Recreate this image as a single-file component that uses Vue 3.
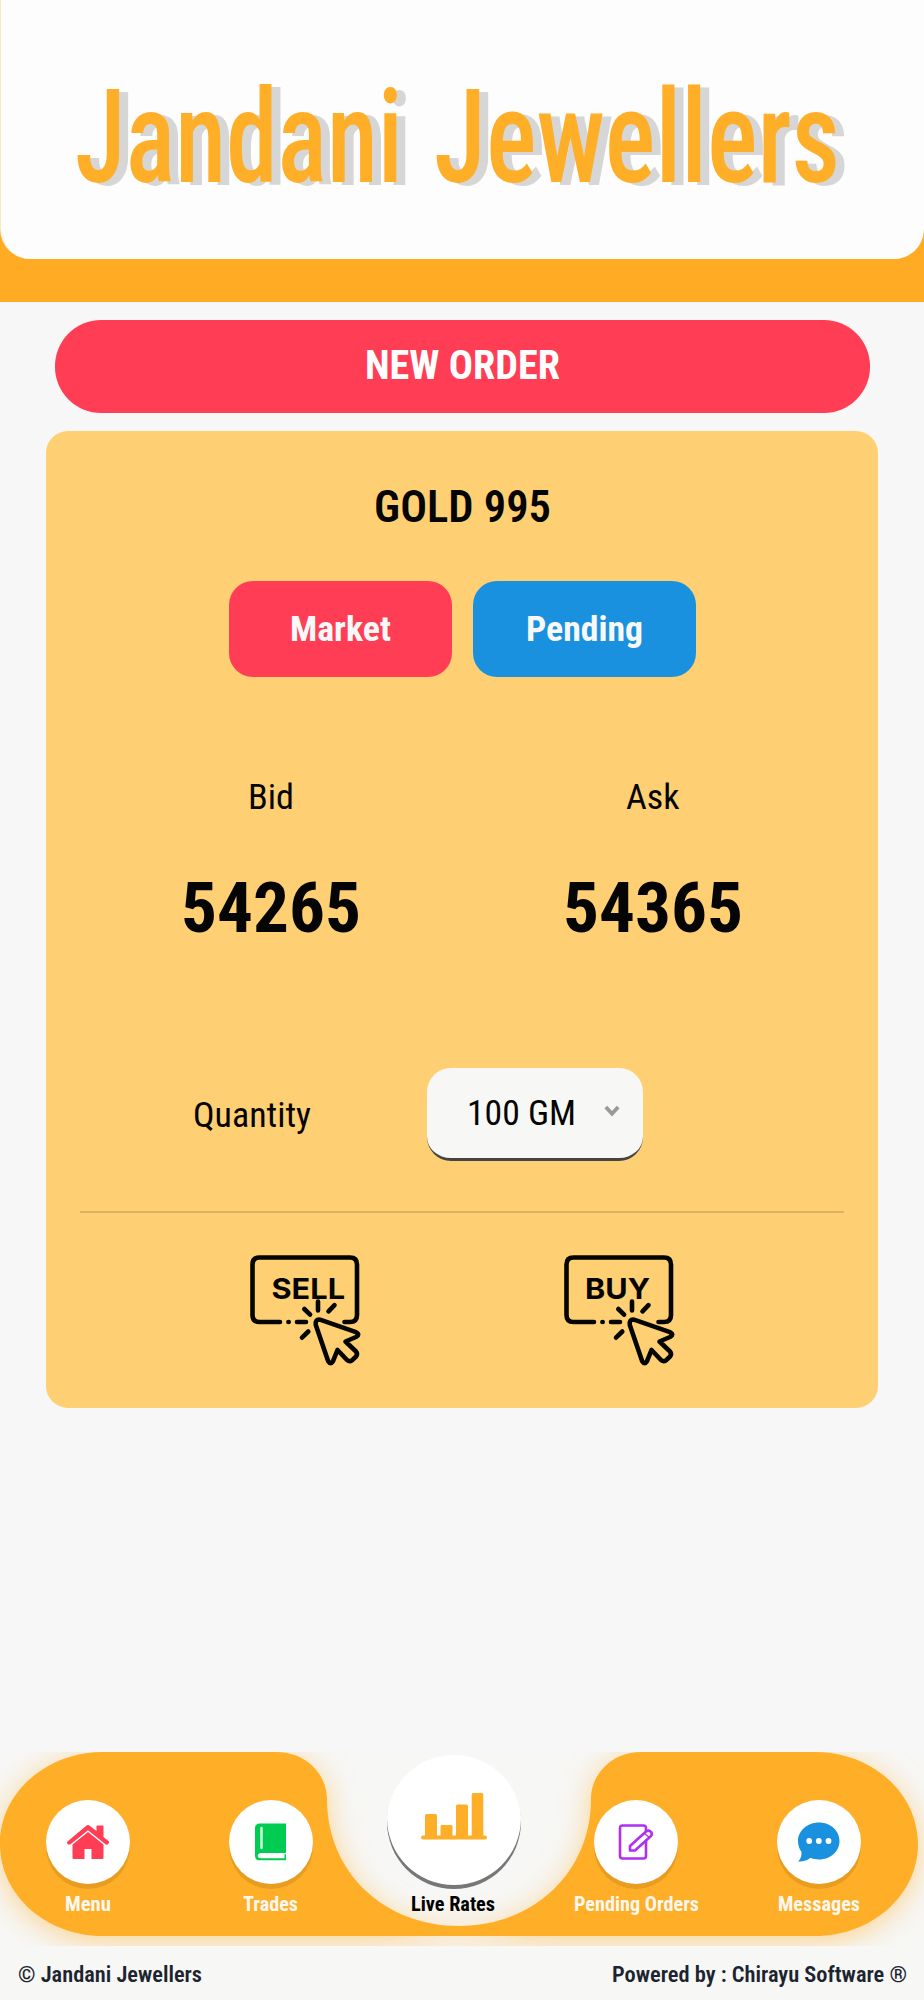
<script setup>
import { h } from 'vue'

// Text set to an exact advance width; the baseline lies at the font size.
const Fit = (p) =>
  h('svg', { width: p.w, height: p.size * 1.25, class: 'fit', style: { flex: 'none', marginBottom: -p.size / 4 + 'px' } }, [
    h('text', {
      x: 0, y: p.size, textLength: p.w, lengthAdjust: 'spacingAndGlyphs',
      'font-size': p.size, 'font-weight': p.weight || 700, fill: 'currentColor'
    }, p.t)
  ])
Fit.props = ['t', 'w', 'size', 'weight']

const nav = [
  { k: 'home', t: 'Menu', w: 46 },
  { k: 'book', t: 'Trades', w: 55 },
  { k: 'live', t: 'Live Rates', w: 84 },
  { k: 'edit', t: 'Pending Orders', w: 125 },
  { k: 'chat', t: 'Messages', w: 82 }
]
</script>

<template>
  <div class="page">
    <header class="header">
      <div class="panel">
        <Fit class="title" t="Jandani" :w="328" :size="129" :weight="500" />
        <Fit class="title" t="Jewellers" :w="406" :size="129" :weight="500" />
      </div>
    </header>

    <div class="banner"><Fit t="NEW ORDER" :w="195" :size="40" /></div>

    <main class="card">
      <Fit class="gold" t="GOLD 995" :w="177" :size="44" :weight="600" />
      <div class="tabs">
        <button class="tab red"><Fit t="Market" :w="101" :size="35.5" /></button>
        <button class="tab blue"><Fit t="Pending" :w="117" :size="35.5" /></button>
      </div>
      <div class="rates">
        <div class="rate"><Fit t="Bid" :w="46" :size="35.5" :weight="400" /><Fit class="num" t="54265" :w="180" :size="71" /></div>
        <div class="rate"><Fit t="Ask" :w="53.5" :size="35.5" :weight="400" /><Fit class="num" t="54365" :w="180" :size="71" /></div>
      </div>
      <div class="qty">
        <Fit class="qlabel" t="Quantity" :w="118" :size="35.5" :weight="400" />
        <div class="select">
          <Fit t="100 GM" :w="109" :size="35.5" :weight="400" />
          <svg class="chev" width="16" height="12" viewBox="0 0 16 12"><path d="M1.800 2 8 8.700 14.200 2" fill="none" stroke="#999" stroke-width="3.800" /></svg>
        </div>
      </div>
      <hr class="rule" />
      <div class="actions">
        <svg v-for="l in ['SELL', 'BUY']" :key="l" class="action" width="112" height="112" viewBox="0 0 112 112">
          <g fill="none" stroke="#050500" stroke-width="4.600" stroke-linecap="round" stroke-linejoin="round">
            <path d="M30 67H9.500Q2.500 67 2.500 60V9.500Q2.500 2.500 9.500 2.500H100Q107 2.500 107 9.500V60Q107 67 100 67H94.500M38.400 67h.3M47 67h9" />
            <path d="M68 46.500v9M54.300 54l5.800 5.700M84.500 50.200l-6 6.200M58.300 76.500l-6.300 6.200" />
            <path d="M70 64.700 106 77.200Q110.500 79.500 106 82L95.500 86.500 106 96.500Q108 99 106 101.500L102 105.300Q99.500 107 97 105L87.500 95 83 106.200Q80.600 110 78.200 106.200L65.800 70Q65 64 70 64.700Z" />
          </g>
          <text v-if="l === 'SELL'" class="cap" x="21.500" y="43.500" textLength="73.500" lengthAdjust="spacingAndGlyphs">SELL</text>
          <text v-else class="cap" x="21" y="43.500" textLength="65" lengthAdjust="spacingAndGlyphs">BUY</text>
        </svg>
      </div>
    </main>

    <nav class="nav">
      <svg class="navbg" width="924" height="194" viewBox="0 0 924 194">
        <path fill="#ffae28" d="M100 0H276C306 0 327 22 327 47C327 121 385 174 459 174C533 174 591 121 591 47C591 22 612 0 641 0H815C872 0 918 41 918 92S872 184 815 184H103C46 184 0 143 0 92S46 0 103 0Z" />
      </svg>
      <div v-for="n in nav" :key="n.k" class="item" :class="n.k">
        <div class="disc">
          <svg v-if="n.k === 'home'" width="44" height="36" viewBox="0 0 44 36" fill="#ff3d55">
            <path d="M6.500 20.500 22 8 37.500 20.500V34Q37.500 35 36.500 35H25.500V25H18.500V35H7.500Q6.500 35 6.500 34Z" />
            <path d="M22 1Q23 1 24 2L30.500 7V2Q30.500 1.500 31 1.500H37Q37.500 1.500 37.500 2V13L43 17.500Q43.500 18.500 42.500 19.500L41.500 20.500Q40.500 21 39.500 20.200L22 6.300 4.500 20.200Q3.500 21 2.500 20.500L1.200 19.500Q.5 18.500 1.500 17.500L20 2Q21 1 22 1Z" />
          </svg>
          <svg v-else-if="n.k === 'book'" width="34" height="38" viewBox="0 0 34 38">
            <path fill="#00cc51" d="M6 .5H32V30H6.500Q3.700 30.500 3.700 32.700T6.500 35.300H30.500V32Q30.500 31 32 31V37.300H5Q1 37 1 32.500V5Q1 .5 6 .5Z" />
            <path d="M7.500 5V25" stroke="#d5f7e1" stroke-width="2.500" stroke-linecap="round" />
          </svg>
          <svg v-else-if="n.k === 'live'" width="66" height="48" viewBox="0 0 66 48" fill="#ffae28">
            <rect x="4" y="22" width="12" height="24" rx="1.500" /><rect x="19.500" y="33" width="12" height="13" rx="1.500" /><rect x="35" y="12.500" width="12" height="33" rx="1.500" /><rect x="50.700" y="1" width="11.600" height="45" rx="1.500" /><rect y="43.500" width="66" height="4" rx="2" />
          </svg>
          <svg v-else-if="n.k === 'edit'" width="36" height="36" viewBox="0 0 36 36" fill="none" stroke="#b02ff5" stroke-width="2.600" stroke-linejoin="round">
            <path d="M28 8V4Q28 1.500 25.500 1.500H4.500Q2 1.500 2 4V32Q2 34.500 4.500 34.500H25.500Q28 34.500 28 32V17" />
            <path d="M12 26.500V22L27.500 8Q30 5.500 32.500 7.500T33 12L17 26.500Z" fill="#fff" />
            <path d="M26.500 9.500l5 4" stroke-width="1.500" />
          </svg>
          <svg v-else width="44" height="42" viewBox="0 0 44 42">
            <path fill="#1991de" d="M22 1.500C33.800 1.500 42.500 9.800 42.500 20S33.800 38.500 22 38.500C18.800 38.500 16 38 13.300 37.100C9.800 39.700 5.500 41 1.200 40.500C4.200 37.500 4.600 34 4.500 31C2.300 28 1 24.200 1 20C1 9.800 10.200 1.500 22 1.500Z" />
            <g fill="#fff"><circle cx="12.200" cy="20" r="2.900" /><circle cx="21.800" cy="20" r="2.900" /><circle cx="31.500" cy="20" r="2.900" /></g>
          </svg>
        </div>
        <Fit class="label" :t="n.t" :w="n.w" :size="20" />
      </div>
    </nav>

    <footer class="footer">
      <Fit t="© Jandani Jewellers" :w="184" :size="22" :weight="600" />
      <Fit t="Powered by : Chirayu Software ®" :w="295" :size="22" :weight="600" />
    </footer>
  </div>
</template>

<style>
body { margin: 0; background: #f7f7f7; }
</style>

<style scoped>
.page { width: 924px; height: 2000px; overflow: hidden; background: #f7f7f7; color: #050505; font-family: "Roboto Condensed", Roboto, "Liberation Sans", sans-serif; font-stretch: 75%; display: flex; flex-direction: column; }
.fit { display: block; overflow: visible; }
.header { height: 302px; background: #ffab23; flex: none; }
.panel { height: 259px; margin-left: 1px; background: #fdfdfd; border-radius: 0 0 30px 30px; box-shadow: -1px 0 0 #ffe7c2; box-sizing: border-box; padding: 53px 0 0 73.500px; color: #ffae28; display: flex; gap: 31.500px; align-items: flex-start; }
.title { filter: drop-shadow(9px 3px 0.700px #d6d6d6); }
.banner { flex: none; width: 815px; height: 93px; margin: 18px 0 0 55px; border-radius: 46px; background: #ff3d55; color: #fff; display: flex; justify-content: center; align-items: flex-start; box-sizing: border-box; padding-top: 19px; }
.card { flex: none; width: 832px; height: 977px; margin: 18px 0 0 46px; border-radius: 22px; background: #ffd073; display: flex; flex-direction: column; align-items: center; }
.gold { margin-top: 47px; }
.tabs { display: flex; gap: 21px; margin-top: 59px; }
.tab { width: 223px; height: 96px; border: 0; padding: 24px 0 0; border-radius: 24px; display: flex; justify-content: center; align-items: flex-start; color: #f8f8f8; font: inherit; font-stretch: inherit; }
.red { background: #ff3d55; }
.blue { background: #1991de; }
.rates { display: flex; width: 764px; margin-top: 96px; }
.rate { width: 382px; display: flex; flex-direction: column; align-items: center; }
.num { margin-top: 52px; }
.qty { display: flex; align-items: flex-start; width: 100%; height: 93px; margin-top: 136.500px; }
.qlabel { margin-top: 23px; margin-left: 146.500px; }
.select { width: 216px; height: 93px; box-sizing: border-box; margin-left: 116px; padding: 20.500px 0 0 40px; border-radius: 24px; background: #f7f7f5; border-bottom: 3.500px solid #444; display: flex; align-items: flex-start; }
.chev { margin: 16px 0 0 28.500px; }
.rule { width: 764px; height: 2px; margin: 50px 0 0; border: 0; background: #dcb263; }
.actions { width: 100%; display: flex; gap: 202px; margin-top: 42px; }
.action:first-child { margin-left: 204px; }
.action { overflow: visible; }
.cap { font: 700 28.500px Inter, sans-serif; fill: #050500; }
.nav { position: relative; flex: none; height: 194px; margin-top: 344px; background: #f7f7f5; overflow: hidden; display: flex; }
.navbg { position: absolute; left: 0; top: 0; overflow: visible; filter: drop-shadow(0 5px 14px rgba(255,174,40,.5)); }
.item { position: relative; width: 182.600px; flex: none; display: flex; flex-direction: column; align-items: center; color: #fcf8f0; }
.item.home { margin-left: -3px; }
.disc { width: 84px; height: 84px; margin-top: 48px; border-radius: 50%; background: #fff; box-shadow: 0 5px 0 #e89c20; display: flex; align-items: center; justify-content: center; }
.label { margin-top: 7px; }
.live { color: #000; }
.live .disc { width: 134px; height: 134px; margin-top: 3px; margin-left: 1px; box-shadow: inset 0 -4px 0 #777; }
.live .disc svg { margin-top: -12px; }
.live .label { margin-top: 2px; }
.footer { flex: none; height: 54px; background: #f7f7f5; color: #1c2430; display: flex; align-items: flex-start; justify-content: space-between; padding: 14px 17px 0 18px; box-sizing: border-box; }
</style>
